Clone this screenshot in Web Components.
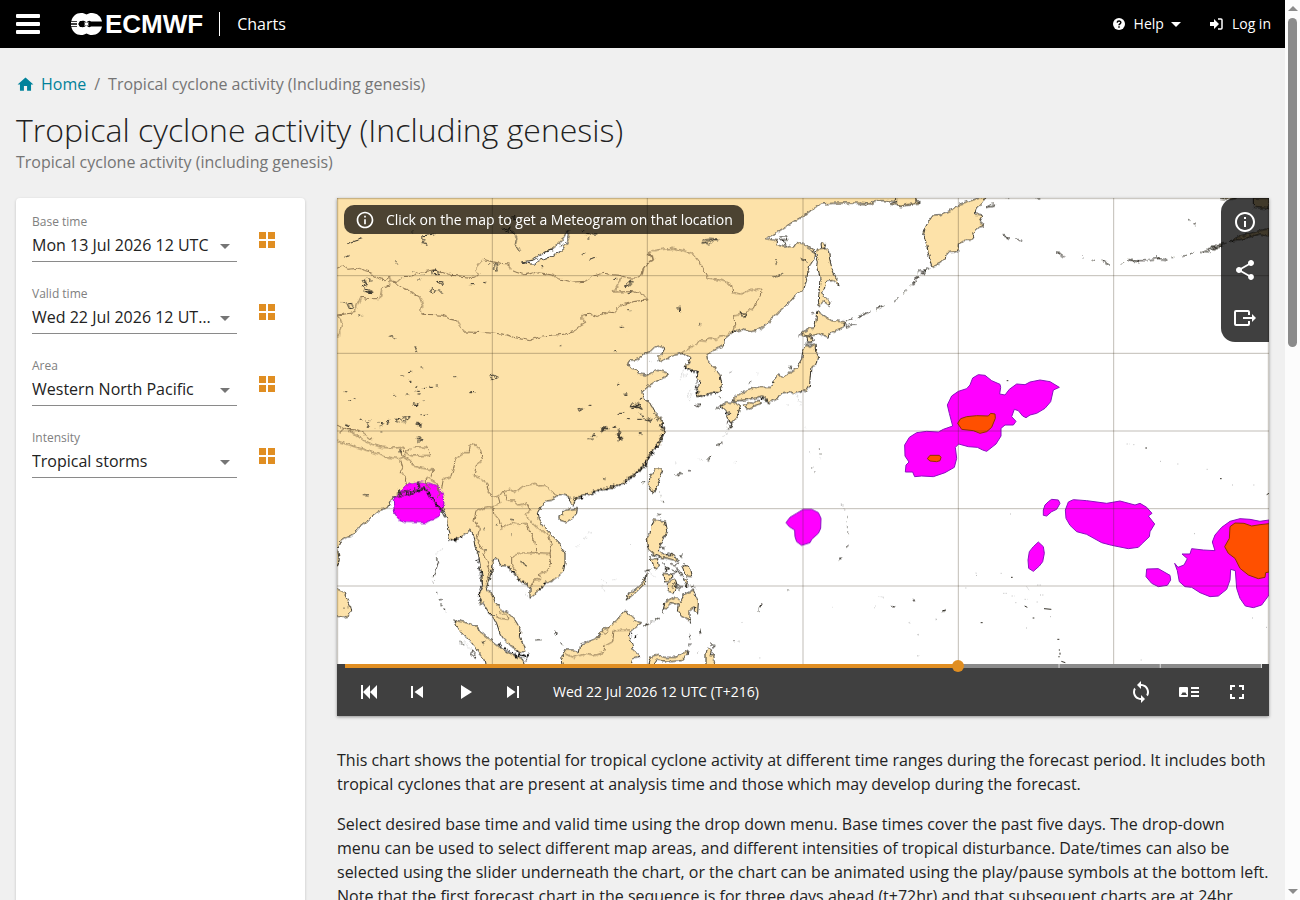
<!DOCTYPE html>
<html lang="en">
<head>
<meta charset="utf-8">
<meta name="viewport" content="width=device-width, initial-scale=1">
<title>Tropical cyclone activity (Including genesis) | ECMWF Charts</title>
<style>
body {
    margin: 0;
    font-family: "Open Sans", "Noto Sans", sans-serif;
    font-size: 16px;
    line-height: 24px;
    color: #222;
    background: #f0f0f0;
}
</style>
</head>
<body>
<charts-page>
    <charts-header slot="header"></charts-header>
    <chart-title slot="title" heading="Tropical cyclone activity (Including genesis)" subheading="Tropical cyclone activity (including genesis)"></chart-title>
    <chart-filters slot="filters">
        <chart-select name="base" label="Base time" options="Mon 13 Jul 2026 12 UTC|Mon 13 Jul 2026 00 UTC"></chart-select>
        <chart-select name="valid" label="Valid time" options="Wed 22 Jul 2026 12 UTC (T+216)|Thu 23 Jul 2026 12 UTC (T+240)"></chart-select>
        <chart-select name="area" label="Area" options="Western North Pacific|Eastern North Pacific"></chart-select>
        <chart-select name="intensity" label="Intensity" options="Tropical storms|Hurricanes"></chart-select>
    </chart-filters>
    <chart-viewer>
        <cyclone-map></cyclone-map>
        <chart-player slot="player" time="Wed 22 Jul 2026 12 UTC (T+216)"></chart-player>
    </chart-viewer>
    <chart-description>
        <p>This chart shows the potential for tropical cyclone activity at different time ranges during the forecast period. It includes both tropical cyclones that are present at analysis time and those which may develop during the forecast.</p>
        <p>Select desired base time and valid time using the drop down menu. Base times cover the past five days. The drop-down menu can be used to select different map areas, and different intensities of tropical disturbance. Date/times can also be selected using the slider underneath the chart, or the chart can be animated using the play/pause symbols at the bottom left. Note that the first forecast chart in the sequence is for three days ahead (t+72hr) and that subsequent charts are at 24hr</p>
    </chart-description>
</charts-page>

<script>
// attach an open shadow root with the given markup
function render (el, html) {
    const template = document.createElement('template');
    template.innerHTML = html;
    el.attachShadow({ mode: 'open' }).appendChild(template.content.cloneNode(true));
}

function icon (path, size = 24) {
    return `<svg viewBox="0 0 24 24" width="${size}" height="${size}" fill="currentColor" aria-hidden="true"><path d="${path}"/></svg>`;
}

const icons = {
    home: 'M10 20v-6h4v6h5v-8h3L12 3 2 12h3v8z',
    grid: 'M4 4h7v7H4zM13 4h7v7h-7zM4 13h7v7H4zM13 13h7v7h-7z',
    info: 'M11 7h2v2h-2zm0 4h2v6h-2zm1-9C6.48 2 2 6.48 2 12s4.48 10 10 10 10-4.48 10-10S17.52 2 12 2zm0 18c-4.41 0-8-3.59-8-8s3.59-8 8-8 8 3.59 8 8-3.59 8-8 8z',
    share: 'M18 16.08c-.76 0-1.44.3-1.96.77L8.91 12.7c.05-.23.09-.46.09-.7s-.04-.47-.09-.7l7.05-4.11c.54.5 1.25.81 2.04.81 1.66 0 3-1.34 3-3s-1.34-3-3-3-3 1.34-3 3c0 .24.04.47.09.7L8.04 9.81C7.5 9.31 6.79 9 6 9c-1.66 0-3 1.34-3 3s1.34 3 3 3c.79 0 1.5-.31 2.04-.81l7.12 4.16c-.05.21-.08.43-.08.65 0 1.61 1.31 2.92 2.92 2.92s2.92-1.31 2.92-2.92-1.31-2.92-2.92-2.92z',
    exit: 'M3 4h12a2 2 0 0 1 2 2v3h-2V6H3v12h12v-3h2v3a2 2 0 0 1-2 2H3a2 2 0 0 1-2-2V6a2 2 0 0 1 2-2zM10 11h9V8l4 4-4 4v-3h-9z',
    first: 'M4 5h2v14H4zM6 12l7-7v14zM13 12l7-7v14z',
    previous: 'M6 6h2v12H6zM9.5 12l8.500 6V6z',
    play: 'M8 5v14l11-7z',
    next: 'M6 18l8.500-6L6 6zM16 6v12h2V6z',
    loop: 'M12 4V1L8 5l4 4V6c3.31 0 6 2.69 6 6 0 1.01-.25 1.970-.7 2.800l1.460 1.460C19.540 15.030 20 13.570 20 12c0-4.420-3.580-8-8-8zm0 14c-3.310 0-6-2.690-6-6 0-1.010.25-1.970.7-2.800L5.240 7.740C4.460 8.970 4 10.430 4 12c0 4.420 3.580 8 8 8v3l4-4-4-4z',
    legend: 'M3 7h7a1 1 0 0 1 1 1v8a1 1 0 0 1-1 1H3a1 1 0 0 1-1-1V8a1 1 0 0 1 1-1zM4 15h6l-2-3-1 1-1-1zM14 7h8v2h-8zM14 11h8v2h-8zM14 15h8v2h-8z',
    fullscreen: 'M7 14H5v5h5v-2H7zM5 10h2V7h3V5H5zM17 17h-3v2h5v-5h-2zM14 5v2h3v3h2V5z'
};

class ChartsPage extends HTMLElement {
    constructor () {
        super();
        render(this, `
<style>
:host {
    display: grid;
    grid-template-columns: minmax(0, 1fr) 15px;
    height: 100vh;
}
.scroller {
    overflow-y: auto;
    scrollbar-width: none;
    background: #f0f0f0;
}
.content {
    padding: 24px 16px 0;
}
.columns {
    display: grid;
    grid-template-columns: 289px minmax(0, 1fr);
    gap: 32px;
    margin-top: 24px;
}
.bar {
    display: flex;
    flex-direction: column;
    align-items: center;
    justify-content: space-between;
    box-sizing: border-box;
    padding: 6px 0;
    background: #fcfcfc;
}
.up, .down {
    border: 5px solid transparent;
    border-top: 0;
    border-bottom: 5px solid #8b8b8b;
}
.down {
    border-bottom: 0;
    border-top: 5px solid #8b8b8b;
}
.thumb {
    width: 9px;
    height: 37%;
    margin: 7px 0 auto;
    border-radius: 5px;
    background: #8b8b8b;
}
</style>
<div class="scroller">
    <slot name="header"></slot>
    <div class="content">
        <slot name="title"></slot>
        <div class="columns">
            <slot name="filters"></slot>
            <main><slot></slot></main>
        </div>
    </div>
</div>
<div class="bar" aria-hidden="true"><i class="up"></i><i class="thumb"></i><i class="down"></i></div>
`);
    }
}

class ChartsHeader extends HTMLElement {
    constructor () {
        super();
        render(this, `
<style>
:host {
    display: block;
    background: #000;
    color: #fff;
}
header, nav, a, button {
    display: flex;
    align-items: center;
}
header {
    height: 48px;
    padding: 0 14px 0 16px;
}
a, button {
    color: inherit;
    font: inherit;
    text-decoration: none;
    background: none;
    border: 0;
    padding: 0;
    cursor: pointer;
}
.menu {
    flex-direction: column;
    gap: 4px;
    width: 24px;
    margin-right: 31px;
}
.menu i {
    width: 24px;
    height: 4px;
    border-radius: 1px;
    background: #fff;
}
.brand {
    gap: 3px;
    font: bold 26px/24px "Liberation Sans", Arial, sans-serif;
}
.app {
    margin-left: 16px;
    padding-left: 17px;
    border-left: 1px solid #fff;
}
nav {
    margin-left: auto;
    gap: 29px;
    font-size: 14px;
}
nav > * {
    gap: 9px;
}
.caret {
    margin-left: -2px;
    border: 5px solid transparent;
    border-top-color: #fff;
    border-bottom: 0;
}
</style>
<header>
    <button class="menu" aria-label="Menu"><i></i><i></i><i></i></button>
    <a class="brand" href="#">
        <svg width="31" height="22" viewBox="0 0 31 22" aria-hidden="true">
            <path fill="#fff" d="M10 0c2.500 0 4 .6 5.500 1.500C17 .6 18.500 0 21 0c5 0 9 3.500 10 8.500H20c-2-1.500-3.500 0-4.500 1.200C14 8 12.500 7.500 10.500 8H.4C1.500 3.500 5 0 10 0zM.4 14h10c2 .5 3.500 0 5.100-1.700 1 1.200 2.500 2.700 4.500 1.200h11c-1 5-5 8.500-10 8.500-2.500 0-4-.6-5.500-1.500C14 21.400 12.500 22 10 22 5 22 1.500 18.500.4 14z"/>
            <path stroke="#fff" stroke-width="1.500" d="M0 9.500h8M0 12.500h8"/>
            <path fill="#fff" d="M6 8h3l-2 3 2 3H6zM13 9.500h5L17 11l1 1.500h-5l1-1.500z"/>
        </svg>
        <span>ECMWF</span>
    </a>
    <a class="app" href="#">Charts</a>
    <nav>
        <button>
            <svg width="12" height="12" viewBox="0 0 12 12" aria-hidden="true"><circle cx="6" cy="6" r="6" fill="#fff"/><path d="M4.200 4.600c.2-2.300 3.800-2 3.600.1C7.700 5.800 6 5.900 6 7.200M6 8.300v1.500" fill="none" stroke="#000" stroke-width="1.500"/></svg>
            <span>Help</span>
            <i class="caret"></i>
        </button>
        <a href="#">
            <svg width="13" height="12" viewBox="0 0 13 12" aria-hidden="true"><path d="M0 4h4V1l5 5-5 5V8H0z" fill="#fff"/><path d="M8 1h3q1 0 1 1v8q0 1-1 1H8" fill="none" stroke="#fff" stroke-width="1.500"/></svg>
            <span>Log in</span>
        </a>
    </nav>
</header>
`);
    }
}

class ChartTitle extends HTMLElement {
    constructor () {
        super();
        const heading = this.getAttribute('heading');
        render(this, `
<style>
:host {
    display: block;
    color: #757575;
}
nav, a {
    display: flex;
    align-items: center;
}
nav {
    gap: 8px;
}
a {
    gap: 6px;
    color: #00829b;
    text-decoration: none;
}
h1 {
    margin: 14px 0 0;
    font-size: 32px;
    font-weight: 300;
    line-height: 40px;
    color: #222;
}
p {
    margin: 0;
}
</style>
<nav aria-label="Breadcrumb"><a href="#">${icon(icons.home, 19)}Home</a><span>/</span><span>${heading}</span></nav>
<h1>${heading}</h1>
<p>${this.getAttribute('subheading')}</p>
`);
    }
}

class ChartFilters extends HTMLElement {
    constructor () {
        super();
        render(this, `
<style>
:host {
    display: flex;
    flex-direction: column;
    gap: 24px;
    padding: 16px;
    border-radius: 4px;
    background: #fff;
    box-shadow: 0 1px 3px rgba(0, 0, 0, .2);
}
</style>
<slot></slot>
`);
    }
}

class ChartSelect extends HTMLElement {
    constructor () {
        super();
        const id = this.getAttribute('name');
        const label = this.getAttribute('label');
        const options = this.getAttribute('options').split('|');
        render(this, `
<style>
:host {
    display: flex;
    gap: 8px;
}
.field {
    position: relative;
    flex: 1;
    min-width: 0;
}
label {
    display: block;
    font-size: 12px;
    line-height: 16px;
    color: #808080;
}
select {
    appearance: none;
    display: block;
    width: 100%;
    height: 32px;
    padding: 0 26px 1px 0;
    border: 0;
    border-bottom: 1px solid #8a8a8a;
    border-radius: 0;
    background: none;
    color: #222;
    font: inherit;
    text-overflow: ellipsis;
}
.field::after {
    content: "";
    position: absolute;
    right: 7px;
    bottom: 13px;
    border: 5px solid transparent;
    border-top-color: #757575;
    border-bottom: 0;
}
button {
    display: grid;
    place-items: center;
    align-self: end;
    width: 44px;
    height: 44px;
    padding: 0;
    border: 0;
    background: none;
    color: #e08e22;
}
</style>
<div class="field">
    <label for="${id}">${label}</label>
    <select id="${id}">${options.map(o => `<option>${o}</option>`).join('')}</select>
</div>
<button aria-label="All values of ${label}">${icon(icons.grid)}</button>
`);
    }
}

class ChartViewer extends HTMLElement {
    constructor () {
        super();
        render(this, `
<style>
:host {
    display: block;
    background: #fff;
    box-shadow: 0 1px 3px rgba(0, 0, 0, .4);
}
.chart {
    position: relative;
}
.hint {
    position: absolute;
    top: 7px;
    left: 7px;
    display: flex;
    align-items: center;
    gap: 11px;
    height: 29px;
    padding: 0 11px;
    border-radius: 10px;
    background: rgba(0, 0, 0, .7);
    color: #fff;
    font-size: 14px;
}
.tools {
    position: absolute;
    top: 0;
    right: 0;
    display: flex;
    flex-direction: column;
    border-radius: 14px 0 0 14px;
    background: rgba(0, 0, 0, .75);
}
button {
    display: grid;
    place-items: center;
    width: 48px;
    height: 48px;
    padding: 0;
    border: 0;
    background: none;
    color: #fff;
}
</style>
<div class="chart">
    <slot></slot>
    <div class="hint">${icon(icons.info, 20)}<span>Click on the map to get a Meteogram on that location</span></div>
    <div class="tools">
        <button aria-label="Information">${icon(icons.info)}</button>
        <button aria-label="Share">${icon(icons.share)}</button>
        <button aria-label="Export">${icon(icons.exit)}</button>
    </div>
</div>
<slot name="player"></slot>
`);
    }
}

// The map is cut in tiles; three units are one pixel at full size.
class CycloneMap extends HTMLElement {
    constructor () {
        super();
        render(this, `
<style>
:host {
    display: block;
}
svg {
    display: block;
    width: 100%;
    height: auto;
}
.fill, .isle { fill: #fde2a9; }
.coast, .isle, .lake, .border, .mark { stroke: #35322a; stroke-width: 3; stroke-linejoin: bevel; }
.coast, .border, .mark { fill: none; }
.rough { fill: none; stroke: #111; stroke-width: 7; stroke-dasharray: 4 5 3 9 6 4 2 7; }
.lake { fill: #fff; }
.border { stroke: #8a7350; }
.mark { stroke-width: 3; }
.faint { fill: none; stroke: #bbb; stroke-width: 3; stroke-dasharray: 3 4; }
.storm { fill: #f0f; stroke: #8a10c0; stroke-width: 3; }
.strong { fill: #ff5000; stroke: #8f3000; stroke-width: 3; }
.grid { fill: none; stroke: #403420; stroke-opacity: .32; stroke-width: 3; }
</style>
<svg viewBox="0 0 2796 1398" role="img" aria-label="Map of tropical cyclone activity in the Western North Pacific">
<filter id="ragged" filterUnits="userSpaceOnUse" x="0" y="0" width="2796" height="1398">
<feTurbulence type="fractalNoise" baseFrequency=".06" numOctaves="3" seed="4"/>
<feDisplacementMap in="SourceGraphic" scale="14" xChannelSelector="R" yChannelSelector="G"/>
</filter>
<rect width="2796" height="1398" fill="#fff"/>

<g filter="url(#ragged)">
<!-- mainland -->
<path class="fill" transform="translate(-21 -24)" d="M-20-20H895V750H-20z"/>
<path class="fill" transform="translate(879 -24)" d="M-10-20H855L860 30 870 42 840 45 810 48 780 42 800 35 770 32 740 32 720 42 690 40 650 39 610 40 575 42 545 60 520 78 490 95 470 108 440 128 408 145 430 150 445 152 440 162 465 172 480 166 490 172 500 158 520 160 535 172 548 178 553 190 552 208 540 225 533 245 530 270 522 295 500 312 480 335 450 362 425 388 400 410 380 422 360 425 335 418 320 422 305 430 285 445 280 465 255 480 230 495 232 510 250 530 270 555 275 580 270 603 240 610 215 618 200 620 198 600 208 585 210 570 200 560 205 545 185 540 165 530 175 520 180 503 155 490 130 497 110 505 92 515 82 505 95 492 105 475 95 468 75 470 60 485 45 490 30 505 15 510 0 510 -7 520 5 535 20 537 30 552 50 556 65 548 80 540 110 548 115 558 95 565 80 572 60 585 45 598 35 608 45 625 60 640 70 655 78 672 95 685 98 700 85 705 100 712 108 720 95 735 90 750H-10z"/>
<path class="fill" transform="translate(-21 666)" d="M-20 0H990V72L975 90 960 105 950 130 935 140 925 155 900 175 880 190 850 200 820 207 800 212 780 222 755 230 735 240 730 255 718 245 720 230 700 225 680 228 665 238 650 240 635 258 622 278 625 300 640 320 665 345 690 370 705 400 705 430 700 455 680 475 655 488 640 500 625 512 600 532 600 505 595 495 575 488 560 470 545 450 530 438 510 437 505 418 490 420 488 445 480 470 470 500 475 515 485 520 495 545 515 570 535 580 555 600 570 625 568 650 580 675 585 695 570 695 545 680 520 655 510 640 500 610 490 590 475 575 460 550 450 550 448 520 458 500 455 460 450 435 445 400 435 380 430 350 420 330 410 340 395 348 380 360 355 358 360 340 352 315 350 295 340 270 330 265 315 250 305 235 297 215 280 208 262 215 240 222 215 228 190 230 185 240 175 260 160 268 145 272 130 285 110 305 85 325 70 345 45 355 30 365 22 385 28 420 22 440H-20z"/>
<path class="fill" transform="translate(879 666)" d="M-10 0H95L98 30 90 45 95 60 80 70 75 85 60 100 50 115 45 135 30 150 10 165-10 175z"/>

<!-- Mongolia and China -->
<g transform="translate(-21 -24)">
<path class="lake" d="M574 216 600 222 615 222 630 210 660 201 685 188 700 175 712 155 718 135 716 122 710 124 705 135 696 150 680 166 665 179 645 186 628 199 610 210z"/>
<path class="border" d="M21 235 35 228 50 238 75 236 90 232 105 242 122 246 130 258 145 266 165 269 182 262 185 272 200 277 215 263 240 262 262 248 295 243 312 239 330 244 352 248 362 256 388 258 420 262 436 262 446 254 438 242 438 230 450 214 462 208 480 214 500 218 520 221 536 222 542 240 562 248 585 254 612 248 640 250 670 256 680 266 705 270 730 276 765 274 790 258 820 250 845 254 868 256 895 264 920 264 936 254 940 238 955 218 970 210 966 196 954 192"/>
<path class="border" d="M21 375 45 372 75 368 82 345 92 322 125 326 150 326 156 295 178 288 180 275 198 278 210 290 238 302 250 312 268 320 278 345 268 362 280 373 310 374 340 376 360 388 380 392 390 410 405 426 440 427 500 430 528 434 550 442 600 452 635 438 700 433 730 425 752 408 766 400 756 388 756 375 780 373 800 380 832 366 852 368 872 346 910 335 950 330 938 314 912 305 850 306 875 262"/>
<path class="border" d="M21 375 32 390 38 408 26 425 24 440M21 705 45 718 85 720 105 735 125 750"/>
<path class="mark" d="M100 268 110 285 95 287 108 298 120 300 125 308 105 306M115 265 122 275M275 138 312 132M275 138 285 150 276 158 290 160 294 168M50 164 70 154 97 146M46 202 56 196M197 214 202 224M36 334 48 340M52 342 65 340 70 354 58 356zM85 374 95 378M178 442 188 440 194 446M256 470 262 486M320 274 340 276 335 284zM300 305 308 295 320 302 310 310zM326 300 338 312M308 242 322 240 326 254 310 254zM496 220 506 226 498 244 490 238zM480 557 490 555 505 565 495 570 484 568zM418 608 436 608M745 658 755 652 758 660 748 664zM884 290 905 270 900 285zM890 312 905 305M460 274 468 276M420 284 430 284M690 468 696 466M870 412 878 412M892 362 900 362M755 195 765 188M778 208 794 202M640 188 660 180 668 184M690 170 700 164"/>
<path class="mark" stroke-linecap="square" d="M517 118 540 112 530 125 552 130 545 118 525 122M552 130 560 145 556 165 566 172 570 184M535 95 550 75 552 90 565 85M256 470 262 486M102 268 112 284M106 304 124 306"/>
<path class="mark" d="M214 558h7M234 548 245 546M272 534h6M238 574h6M256 592h5M275 595h11M298 592h8M318 588h6M370 560h8M228 615h8M258 604h12M260 612h10M248 643 264 643M250 640l8 6 8-8M279 632h4M190 616h4M42 605h6M56 629h8M72 626h4M88 686 96 690M104 694 110 700 120 692M114 712h5M130 718h4M146 700 158 702 150 710M168 696 178 690 172 704M194 684 206 686 200 692M212 690 218 680 226 688 216 696M222 698 238 682M222 680l14 2-4 8M260 706 276 702M262 698l8 12M272 674h4M264 745 276 748M264 740l10 2M46 706 58 710M152 726h4M284 676h6M776 646h8M862 583h6M884 612h8M886 616h6M904 650 928 646M904 656 924 652M912 644 936 658M915 638 922 648M930 625h8M866 670h16M890 686h10M924 688h12M950 688 962 694M786 740h14M812 722 826 708M816 716 836 718M814 726 832 712M866 716 872 728 862 738 876 745M868 724 862 732 870 746M848 712h10M924 732h12M244 126h4M272 254h8M246 246h4M768 134h14M790 132h12M265 270h5M850 268h8M634 230h5M850 482h6M472 224h4M756 122h6M772 144h6"/>
</g>

<!-- north-east China, Korea, Japan -->
<g transform="translate(879 -24)">
<path class="coast" d="M855 24 860 30 870 42 840 45 810 48 780 42 800 35 770 32 740 32 720 42 690 40 650 39 610 40 575 42 545 60 520 78 490 95 470 108 440 128 408 145 430 150 445 152 440 162 465 172 480 166 490 172 500 158 520 160 535 172 548 178 553 190 552 208 540 225 533 245 530 270 522 295 500 312 480 335 450 362 425 388 400 410 380 422 360 425 335 418 320 422 305 430 285 445 280 465 255 480 230 495 232 510 250 530 270 555 275 580 270 603 240 610 215 618 200 620 198 600 208 585 210 570 200 560 205 545 185 540 165 530 175 520 180 503 155 490 130 497 110 505 92 515 82 505 95 492 105 475 95 468 75 470 60 485 45 490 30 505 15 510 0 510 -7 520 5 535 20 537 30 552 50 556 65 548 80 540 110 548 115 558 95 565 80 572 60 585 45 598 35 608 45 625 60 640 70 655 78 672 95 685 98 700 85 705 100 712 108 720 95 735 90 750"/>
<path class="border" d="M36 254 40 238 55 218 70 210 66 196 54 192 70 182 95 178 130 175 160 182 188 190 205 210 218 235 232 262 260 268 285 275 305 285 308 308 335 312 365 298 396 298 394 315 382 328 370 355 340 372 312 378 315 412 305 430M300 426 290 436 270 438 260 448 236 444 230 454 210 452 190 468 155 490"/>
<path class="rough" d="M165 532 185 542 202 548 200 575 196 605 212 620 262 606M276 645 290 672 295 690M310 632 360 625 415 610M485 606 515 604M305 425 322 422M430 592 448 556M415 640 395 622"/>
<path class="mark" d="M218 150 235 148 268 150M218 158 240 152 264 152M218 160 230 156 236 166 248 154M430 264 445 256 460 250M434 210h8M436 222h6M512 205 530 216M512 212 528 210M518 214 528 206M444 142 470 138 474 150 455 152 462 162M450 148l14 10 4 10M330 368 350 370 346 382 334 380zM142 354h6M152 366 150 350M208 404 214 404M0 278 8 276M8 638 0 650 25 652 38 658M10 648h20l-8-8M30 668 45 690 65 685M50 690 60 694 72 682M72 674 92 690M80 690 95 684M82 512 92 506"/>
<path class="isle" d="M562 180 575 178 588 176 596 184 598 202 605 232 616 258 628 286 608 272 590 274 582 295 578 308 586 322 600 335 598 346 582 335 568 350 565 330 568 300 570 262 563 230 565 212 558 195zM575 176 573 160 580 154 587 162 584 174z"/>
<path class="isle" d="M560 362 580 375 605 392 640 395 645 410 620 420 600 430 597 442 570 432 545 437 550 452 530 455 528 440 515 436 518 426 540 414 552 415 558 390z"/>
<path class="isle" d="M530 465 540 472 555 462 557 485 566 500 560 525 543 530 540 570 538 590 530 605 515 600 490 610 480 604 470 610 450 612 440 628 425 635 412 642 408 625 395 618 370 626 345 630 320 632 305 632 325 615 350 600 380 592 425 592 430 570 445 555 455 562 480 548 500 535 515 510 518 485z"/>
<path class="isle" d="M340 645 358 638 370 640 385 628 395 640 372 648 350 658zM275 645 290 636 315 638 330 650 328 660 320 685 305 698 290 685 300 670 285 660z"/>
<path class="mark" d="M645 400 655 388 668 385M642 396 650 408M680 385 700 374 722 364M684 380 716 368M648 412 668 402 680 402M738 358 750 354 764 345M744 352 760 348M792 332 806 322M820 310 828 302M842 284 852 276M846 276h8v8M856 270 868 264 860 262M872 252 885 240 898 236M872 246l14 4 4-10M880 236 888 244M526 460 550 458M526 466 552 464M505 440 512 434M540 366 550 370M478 538 486 530M480 530l6 8M356 580 364 574M255 660 268 648 276 650M258 652l12 6M268 616 272 624M196 644 212 642 204 648zM290 715 310 705M294 706l14 4M302 548h5M522 432 545 444M524 440 546 434M198 614l16 8M202 604l10 4"/>
<path class="faint" d="M60 515h8M382 550h8M160 540 150 570M180 600 172 628M186 610 178 634M500 612 514 650M526 712h3M470 645h4M160 556h10M280 740 290 726"/>
</g>

<!-- Kamchatka and the Aleutians -->
<g transform="translate(1689 -24)">
<path class="isle" d="M252 20 225 28 205 34 180 42 150 62 120 74 100 75 85 95 75 115 71 132 80 165 86 195 96 232 120 220 138 205 142 188 165 186 174 182 175 164 190 152 215 150 222 142 218 128 235 112 252 108 238 98 250 75 225 72 228 58 245 42 258 20z"/>
<path class="isle" d="M-10 0H45L48 32 42 42 20 44 0 50-10 46z"/>
<path class="mark" d="M48 38h14M255 52 270 44 284 42 280 50zM318 24h10M410 24h8M310 134 318 134 326 146M312 138l14 6M348 146 364 152M468 186 486 188 490 196M468 190 480 192M484 198l10 2M576 212 588 208M602 210 612 216M608 212 630 226M546 202h3M662 226 672 216M684 212 695 208 704 216 718 218 712 212 740 212M686 208 712 216M745 209 775 206 802 209M768 204h12M814 202h6M844 200 858 196M870 192 884 188M900 188 920 178 946 180 936 172 970 166 950 164 980 160M904 184 930 186M924 176 960 172M864 88 872 90M880 100 888 104M50 248 60 240 80 244 72 252M35 286 48 276M45 268 52 266"/>
<path class="isle" d="M990 154 1015 140 1060 128 1085 120 1107 116V138L1080 132 1040 144 1010 150zM1060 52 1107 56V24H1060zM960 24q30 8 50 0z"/>
</g>

<!-- India, Indochina, Sumatra, Borneo -->
<g transform="translate(-21 666)">
<path class="isle" d="M375 600 405 607 435 615 450 635 475 655 495 670 520 690 550 705 575 715 590 750H468L462 715 440 690 430 675 410 650 395 640 380 620z"/>
<path class="isle" d="M703 750 695 710 705 690 730 690 748 695 752 672 775 665 800 655 820 628 840 622 860 600 885 570 895 585 905 590 920 605 935 608 920 620 900 635 895 650 905 670 910 690 930 710 910 712 900 750z"/>
<path class="isle" d="M5 500 40 515 50 535 62 560 65 575 55 588 40 592 5 585zM690 290 700 275 720 268 742 265 740 280 725 298 705 306 690 300zM888 540 900 520 925 500 950 472 945 490 920 515 900 532z"/>
<path class="storm" d="M190 245 195 230 212 218 225 200 240 190 265 186 300 190 325 200 338 222 342 250 335 270 325 290 305 300 285 308 225 307 205 296 194 280z"/>
<path class="coast" d="M990 72 975 90 960 105 950 130 935 140 925 155 900 175 880 190 850 200 820 207 800 212 780 222 755 230 735 240 730 255 718 245 720 230 700 225 680 228 665 238 650 240 635 258 622 278 625 300 640 320 665 345 690 370 705 400 705 430 700 455 680 475 655 488 640 500 625 512 600 532 600 505 595 495 575 488 560 470 545 450 530 438 510 437 505 418 490 420 488 445 480 470 470 500 475 515 485 520 495 545 515 570 535 580 555 600 570 625 568 650 580 675 585 695 570 695 545 680 520 655 510 640 500 610 490 590 475 575 460 550 450 550 448 520 458 500 455 460 450 435 445 400 435 380 430 350 420 330 410 340 395 348 380 360 355 358 360 340 352 315 350 295 340 270 330 265 315 250 305 235 297 215 280 208 262 215 240 222 215 228 190 230 185 240 175 260 160 268 145 272 130 285 110 305 85 325 70 345 45 355 30 365 22 385 28 420 22 440"/>
<path class="rough" d="M205 216 230 222 262 214 290 206 300 228 318 252 342 280M950 130 925 155 880 190 800 212 755 232 720 238M354 358 380 358 400 348M442 420 455 470 448 545M535 440 570 480 595 495M628 508 652 488M505 672 560 710 600 705M895 640 918 650M985 80 968 100M560 690 590 720M545 700 600 712M475 575 490 590"/>
<path class="mark" d="M205 210 212 226M208 208l6 14M222 212 228 222M240 208 246 220M252 212 258 202M262 186 270 206M266 184l4 18M280 200 290 214M272 212 282 204M334 272l10 20M200 220 290 206"/>
<path class="border" d="M25 38 45 25 75 42 95 58 125 72 155 82 190 84 222 82 225 110 205 116 165 110 120 94 80 82 45 70 22 64M210 84 212 104 242 122 250 138 280 145 310 150 302 172 285 178 290 195 300 205M212 120 218 140 210 158 228 165 226 185 232 200M250 80 290 82 300 106 245 108 228 100 238 86M335 205 340 178 362 170 372 142 375 116 400 98 418 98 420 78 432 68 442 82 452 90 458 122 440 135 432 165 450 175 470 190 475 215 490 230M302 180 318 190 328 212 322 236M490 232 508 228 520 212 540 208 552 218 580 198 612 190 630 198 645 195 660 210 680 226M490 258 465 262 438 275 432 300 448 330 440 355 458 390 470 420 480 450 468 490M490 258 495 285 508 300 512 325 545 308 565 312 590 310 602 340 615 365 618 398M505 230 510 250 490 258M520 212 530 240 552 240 565 255 590 250 600 270 585 285 600 300 625 325 655 345 665 375 660 400 618 398 565 400 545 410 545 435 560 455M660 400 665 430 650 455 625 462 630 478 612 480 605 500M510 578 530 585 535 598 510 595 495 580M705 700 730 712 765 702 790 708 820 698 825 678 848 665 852 632 900 630M815 635 825 640 840 622"/>
<path class="mark" d="M98 226 116 228M425 690 438 705 436 715 422 705zM388 664 400 672M318 415 326 425 320 440M314 455 310 470M308 485 312 484M312 452 322 440M326 540 336 538M335 552 338 558M341 564 345 572M572 424 592 440 580 436zM500 314h4M460 328h5M544 342h5M462 390h6M542 298 552 300M455 665 466 675M456 672l10-6M260 55 276 60 264 64M205 96 215 90M260 15 275 18M264 10l10 8M46 14 56 18M112 12 118 22M168 10 180 2M198 4 210 8M768 58 788 58M786 48 798 44M812 34 828 22M816 28 838 30M814 36l18-16M860 30 872 38 866 48 878 60M862 34l8 18-4 14M924 42 938 42M820 176 830 178M938 186h8M616 660 636 658M672 640 684 640M674 632l6 14M694 668 700 674M940 618 955 610M962 606 967 603M975 598 985 592M40 562h4M52 562h4M318 518h4M944 455 956 450M20 440 26 430M370 600 380 604"/>
<path class="faint" d="M740 380 752 374M760 356 770 350M775 340 786 338M820 480 834 490M850 478h6M815 500 830 512M320 400 340 385M585 520 600 530M900 378h4M402 665 424 690"/>
</g>

<!-- Taiwan, the Philippines, the Marianas -->
<g transform="translate(879 666)">
<path class="coast" d="M95 0 98 20 108 25 100 40 90 45 95 60 80 70 75 85 60 100 50 115 45 135 30 150 10 165-10 175"/>
<path class="rough" d="M100 20 92 60 75 85 50 120 20 158"/>
<path class="isle" d="M75 150 90 143 98 150 92 172 82 195 70 220 56 195 60 170zM68 300 85 302 103 302 110 335 100 355 90 375 88 392 105 405 130 404 145 425 130 420 112 415 92 412 75 405 55 388 48 355 60 345 62 320z"/>
<path class="isle" d="M60 410 70 418 85 420 88 440 78 447 68 432zM98 460 125 462 125 475 105 488zM112 490 135 475 140 490 130 520 112 512zM155 440 178 440 185 470 168 468zM160 475 172 478 170 502zM190 510 205 545 203 582 192 572 195 562 180 570 180 600 155 590 145 575 148 555 120 548 110 560 100 568 105 545 135 530 150 545 165 522z"/>
<path class="isle" d="M50 750 60 712 85 703 105 712 140 712 160 700 175 690 170 705 155 722 120 725 80 720 60 750zM228 750 228 700 235 685 245 690 240 708 250 700 248 715 258 725 240 750z"/>
<path class="mark" d="M45 480 52 462M48 455 62 448M50 450l10 6M92 385 104 382M94 380l10 8M108 402 120 398 128 410M100 428 110 440 105 450 120 445M104 440l10 4-8 12M120 430 135 438 150 452M128 450l14 6M126 462l16-4M140 446l10 20M126 500 135 490 148 496M140 498 158 500 150 508 140 504zM182 495 196 505M184 504l10-8M160 430 170 442M150 410 158 404M148 404l8 10M130 436 148 430M78 420 90 408M66 404l20 6M160 520 158 530M40 618 55 608M62 607 70 604M44 612l14 2M72 600 90 592M98 568 100 580M180 600 182 608M180 645 184 655M208 628 214 642M210 626v14M240 672 256 678 246 684M82 290 90 282M96 246h4M300 2 308 20M290 10 300 2M292 4l16 4M310 10 302 20M258 78 268 72 278 70M266 76l8-6M230 120 242 108 240 118M234 122l8-8M136 165 156 160M142 166l8-6M174 152h6M636 410 626 420M628 414l6 4M648 382 656 376M386 566 394 552M390 562l2-8M382 570h5M472 510 478 512M848 542 856 542M786 560h10M936 574 946 572M36 186 44 188M180 670v6M150 455 158 470"/>
<path class="mark" stroke-dasharray="3 12" d="M568 86 572 116M548 140 554 166M650 290 654 350M90 214 98 250M634 252 650 275M86 280 94 300M312 660 328 664M200 698h5"/>
<path class="faint" d="M278 50 290 36M206 118 220 120M316 126v4M136 130h5M540 96h4M745 528 764 530M732 562h4M838 608h4M864 644h3M606 560h5M862 708h4M334 608h4M388 714h4M0 380h4M916 598h4M62 460 75 475"/>
</g>
</g>

<path class="storm" transform="translate(879 666)" d="M468 308 480 292 500 280 520 268 545 268 565 278 573 295 572 325 565 340 545 358 540 368 515 376 500 365 495 350 494 330 478 320z"/>

<!-- open Pacific -->
<g transform="translate(1659 456)">
<path class="storm" d="M240 105 248 84 265 74 285 76 305 92 330 103 332 112 329 132 345 135 358 118 380 102 405 104 420 96 450 90 480 95 508 112 490 120 482 155 465 175 440 190 420 195 408 203 398 198 385 182 373 178 365 200 378 214 370 225 345 225 333 235 333 258 318 282 290 304 278 300 262 292 235 290 206 282 196 292 200 325 193 352 165 368 130 380 95 378 74 380 68 366 46 366 48 345 57 336 45 318 44 285 58 262 80 248 110 244 145 246 160 238 188 228 178 190 172 165 185 138 205 124 230 116z"/>
<path class="strong" d="M203 220 212 206 230 200 260 197 295 198 302 190 315 192 316 205 305 232 290 245 270 250 250 242 215 238zM112 326 120 316H148L153 322 150 332 140 335 120 333z"/>
<path class="storm" d="M460 480 465 465 475 455 485 448 505 450 510 460 500 478 485 485 470 498 460 496zM445 576 460 590 463 610 458 635 448 648 430 664 416 655 414 630 418 605 430 590zM526 480 535 456 550 449 590 452 650 460 690 453 735 465 750 460 770 472 786 490 775 498 794 522 780 545 778 560 755 582 745 592 715 596 665 586 635 578 590 553 560 545 540 526 528 505zM770 657 805 656 840 676 842 690 832 706 805 710 785 700 768 680z"/>
<path class="storm" d="M1137 510 1110 514 1080 508 1050 506 1020 514 995 532 975 555 967 576 975 602 940 600 905 596 900 612 876 612 892 626 882 645 864 652 854 640 862 662 868 695 885 710 905 712 930 728 960 740 985 738 1010 718 1020 690 1022 658 1036 662 1040 715 1050 745 1066 768 1090 773 1115 765 1137 735z"/>
<path class="strong" d="M1137 521 1110 524 1085 528 1062 520 1035 519 1020 530 1018 565 1004 590 1015 610 1035 625 1050 655 1075 675 1105 686 1125 682 1127 668 1137 666z"/>
<path class="mark" d="M350 92h5M1130 434 1137 430M158 782 168 780M8 770h6M70 750h4M272 818h6M363 682h5M404 768 412 772M462 776 484 778M428 804h5M990 386h5M766 294h5M502 868h6M508 898v4M510 908v6M507 918v4M514 934 526 938"/>
<path class="faint" d="M710 282h8M730 284h5M810 334h5M862 342h5M950 358h6M1026 405h5M1090 405h4M912 551h5M360 492h4M258 668 260 680M226 714h5M340 730h10M365 738h8M410 710 418 722M376 758h5M404 748h8M442 705h14M450 735h12M440 756h6M480 800h6M408 834h4M82 854h5M82 918h5M56 818h5M1128 832h4M752 930h5M138 808h4M1086 804h6M332 670h5"/>
</g>

<path class="grid" d="M466 0V1398M931 0V1398M1398 0V1398M1864 0V1398M2330 0V1398M0 233H2796M0 466H2796M0 699H2796M0 932H2796M0 1164H2796M0 2H2796M2 0V1398M2794 0V1398"/>
</svg>
`);
    }
}

class ChartPlayer extends HTMLElement {
    constructor () {
        super();
        render(this, `
<style>
:host {
    display: block;
    background: #404040;
    color: #fff;
}
input {
    position: relative;
    display: block;
    appearance: none;
    box-sizing: border-box;
    width: calc(100% - 9px);
    height: 12px;
    margin: 0 1px 0 8px;
    background: none;
    transform: translateY(-4px);
}
.track {
    height: 4px;
}
input::-webkit-slider-runnable-track {
    height: 4px;
    background:
        linear-gradient(90deg, #e08e22 67%, transparent 0),
        linear-gradient(90deg, transparent calc(100% - 1px), #ddd 0),
        linear-gradient(#8b8b8b, #8b8b8b);
    background-repeat: no-repeat, repeat-x, no-repeat;
    background-size: calc(100% - 6px) 4px, calc((100% - 12px) / 9) 4px, calc(100% - 6px) 4px;
    background-position: 0 0, 6px 0, 0 0;
}
input::-webkit-slider-thumb {
    appearance: none;
    width: 12px;
    height: 12px;
    margin-top: -4px;
    border-radius: 50%;
    background: #e08e22;
}
.bar {
    display: flex;
    align-items: center;
    height: 48px;
    padding: 0 8px;
}
button {
    display: grid;
    place-items: center;
    width: 48px;
    height: 48px;
    padding: 0;
    border: 0;
    background: none;
    color: inherit;
}
span {
    margin: 0 auto 0 16px;
    font-size: 14px;
}
</style>
<div class="track"><input type="range" min="0" max="9" value="6" aria-label="Valid time"></div>
<div class="bar">
    <button aria-label="First step">${icon(icons.first)}</button>
    <button aria-label="Previous step">${icon(icons.previous)}</button>
    <button aria-label="Play">${icon(icons.play)}</button>
    <button aria-label="Next step">${icon(icons.next)}</button>
    <span>${this.getAttribute('time')}</span>
    <button aria-label="Loop">${icon(icons.loop)}</button>
    <button aria-label="Legend">${icon(icons.legend)}</button>
    <button aria-label="Full screen">${icon(icons.fullscreen)}</button>
</div>
`);
    }
}

class ChartDescription extends HTMLElement {
    constructor () {
        super();
        render(this, `
<style>
:host {
    display: block;
    margin-top: 32px;
}
::slotted(p) {
    margin: 0 0 16px;
}
</style>
<slot></slot>
`);
    }
}

customElements.define('charts-page', ChartsPage);
customElements.define('charts-header', ChartsHeader);
customElements.define('chart-title', ChartTitle);
customElements.define('chart-filters', ChartFilters);
customElements.define('chart-select', ChartSelect);
customElements.define('chart-viewer', ChartViewer);
customElements.define('cyclone-map', CycloneMap);
customElements.define('chart-player', ChartPlayer);
customElements.define('chart-description', ChartDescription);
</script>
</body>
</html>
